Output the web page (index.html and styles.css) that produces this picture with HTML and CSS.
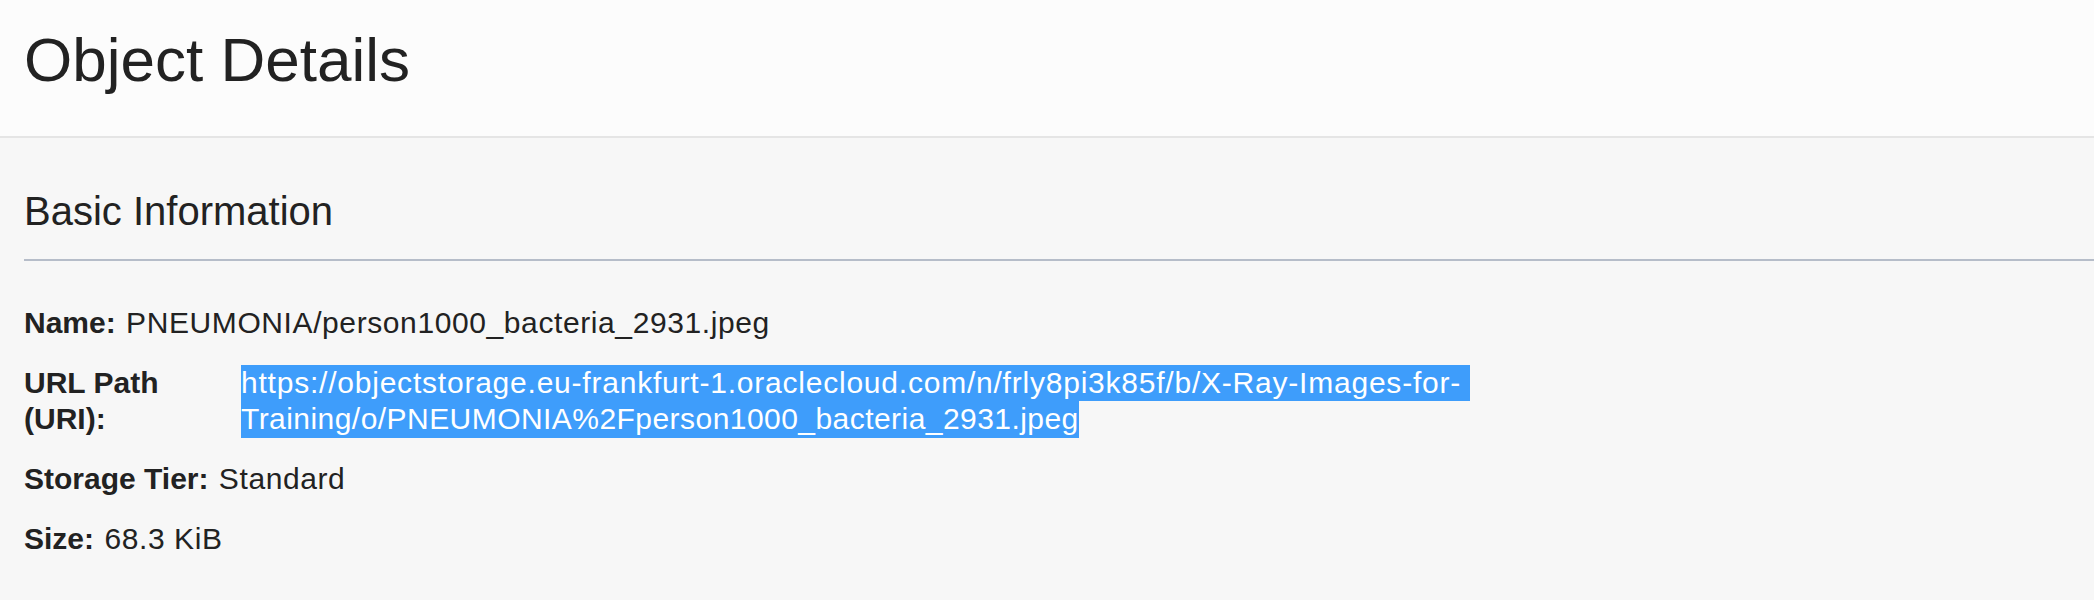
FILE: index.html
```html
<!DOCTYPE html>
<html lang="en">
<head>
<meta charset="utf-8">
<title>Object Details</title>
<link rel="stylesheet" href="styles.css">
</head>
<body>
<header class="page-header">
  <h1 class="page-title">Object Details</h1>
</header>
<main class="section">
  <h2 class="section-title">Basic Information</h2>
  <div class="details">
    <div class="row"><strong class="label">Name:</strong> <span class="value">PNEUMONIA/person1000_bacteria_2931.jpeg</span></div>
    <div class="row row-grid">
      <strong class="label">URL Path (URI):</strong>
      <div class="value url">
        <span class="sel-line sel-first">https://objectstorage.eu-frankfurt-1.oraclecloud.com/n/frly8pi3k85f/b/X-Ray-Images-for-</span>
        <span class="sel-line sel-last">Training/o/PNEUMONIA%2Fperson1000_bacteria_2931.jpeg</span>
      </div>
    </div>
    <div class="row"><strong class="label">Storage Tier:</strong> <span class="value">Standard</span></div>
    <div class="row"><strong class="label">Size:</strong> <span class="value">68.3 KiB</span></div>
  </div>
</main>
</body>
</html>
```
FILE: styles.css
```css
html, body {
  margin: 0;
  padding: 0;
}
body {
  background: #f7f7f7;
  color: #222222;
  font-family: "Liberation Sans", Arial, sans-serif;
  min-height: 600px;
}
.page-header {
  background: #fcfcfc;
  border-bottom: 2px solid #e5e5e5;
  padding: 23px 24px 39px;
}
.page-title {
  margin: 0;
  font-size: 62px;
  line-height: 74px;
  font-weight: 400;
}
.section {
  padding-top: 49px;
}
.section-title {
  margin: 0 0 0 24px;
  padding-bottom: 24px;
  border-bottom: 2px solid #b6bdc9;
  font-size: 40px;
  line-height: 48px;
  font-weight: 400;
}
.details {
  display: flex;
  flex-direction: column;
  gap: 23.5px;
  padding: 43.5px 24px 0;
  font-size: 30px;
  line-height: 36.5px;
}
.label {
  font-weight: 700;
  margin-right: 2px;
}
.value {
  letter-spacing: 0.6px;
}
.row-grid {
  display: grid;
  grid-template-columns: 200px 1fr;
  column-gap: 17px;
}
.row-grid .label {
  margin-right: 0;
}
.url {
  display: flex;
  flex-direction: column;
  align-items: flex-start;
}
.sel-line {
  display: block;
  background: #3e9dfb;
  color: #ffffff;
}
.sel-first {
  letter-spacing: 0.78px;
  padding-right: 9px;
}
.sel-last {
  letter-spacing: 0.45px;
}
```
